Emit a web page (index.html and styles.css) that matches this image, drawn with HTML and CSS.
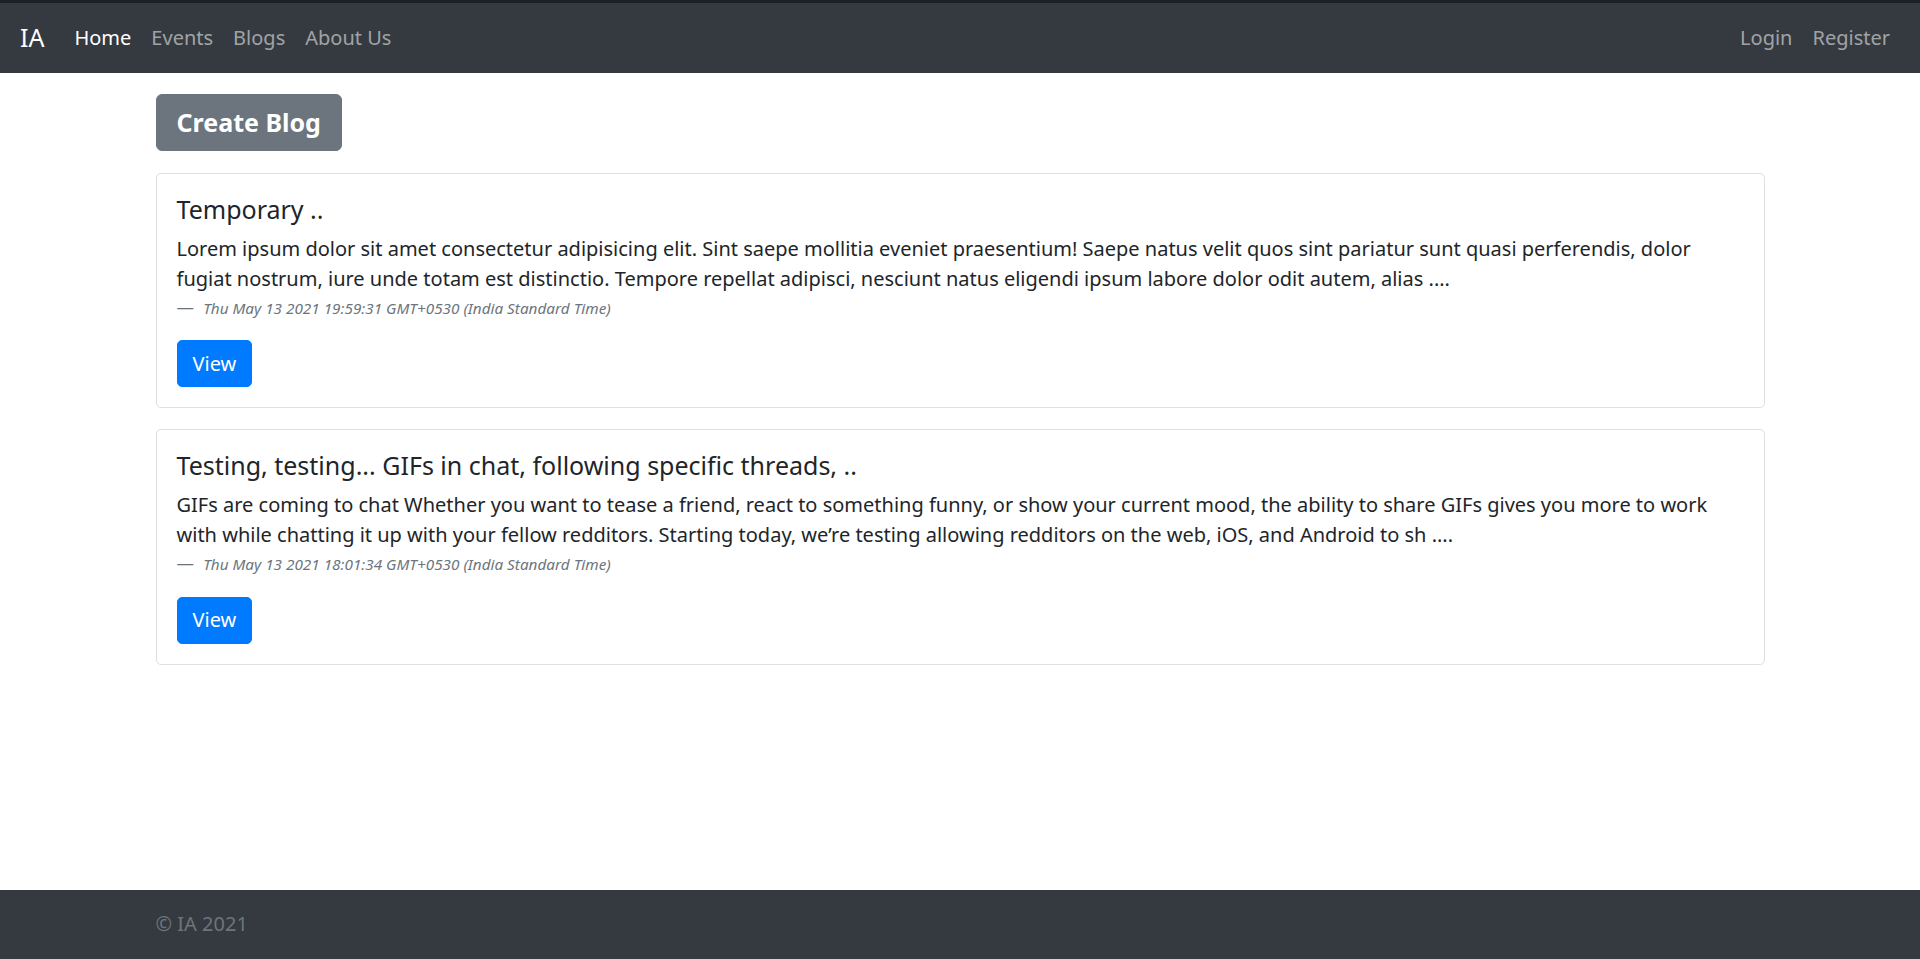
FILE: index.html
```html
<!DOCTYPE html>
<html lang="en">
<head>
<meta charset="utf-8">
<title>IA</title>
<link rel="stylesheet" href="styles.css">
</head>
<body>
<nav class="navbar">
  <a class="brand" href="#">IA</a>
  <ul class="nav-list">
    <li><a class="nav-link active" href="#">Home</a></li>
    <li><a class="nav-link" href="#">Events</a></li>
    <li><a class="nav-link" href="#">Blogs</a></li>
    <li><a class="nav-link" href="#">About Us</a></li>
  </ul>
  <ul class="nav-list nav-right">
    <li><a class="nav-link" href="#">Login</a></li>
    <li><a class="nav-link" href="#">Register</a></li>
  </ul>
</nav>

<main class="container main">
  <div class="actions">
    <a class="btn-create" href="#">Create Blog</a>
  </div>

  <div class="card">
    <h5 class="card-title">Temporary ..</h5>
    <p class="card-text">Lorem ipsum dolor sit amet consectetur adipisicing elit. Sint saepe mollitia eveniet praesentium! Saepe natus velit quos sint pariatur sunt quasi perferendis, dolor fugiat nostrum, iure unde totam est distinctio. Tempore repellat adipisci, nesciunt natus eligendi ipsum labore dolor odit autem, alias ....</p>
    <div class="card-date"> <small class="date-text">Thu May 13 2021 19:59:31 GMT+0530 (India Standard Time)</small></div>
    <a class="btn-view" href="#">View</a>
  </div>

  <div class="card">
    <h5 class="card-title">Testing, testing... GIFs in chat, following specific threads, ..</h5>
    <p class="card-text">GIFs are coming to chat Whether you want to tease a friend, react to something funny, or show your current mood, the ability to share GIFs gives you more to work with while chatting it up with your fellow redditors. Starting today, we’re testing allowing redditors on the web, iOS, and Android to sh ....</p>
    <div class="card-date"> <small class="date-text">Thu May 13 2021 18:01:34 GMT+0530 (India Standard Time)</small></div>
    <a class="btn-view" href="#">View</a>
  </div>
</main>

<footer class="footer">
  <div class="container">
    <span class="copy">© IA 2021</span>
  </div>
</footer>
</body>
</html>
```

FILE: styles.css
```css
* {
  box-sizing: border-box;
}

html, body {
  margin: 0;
  padding: 0;
}

body {
  font-family: "Noto Sans", "Open Sans", sans-serif;
  font-size: 20px;
  line-height: 1.5;
  color: #212529;
  background: #fff;
  min-height: 100vh;
  display: flex;
  flex-direction: column;
}

a {
  text-decoration: none;
}

.navbar {
  display: flex;
  align-items: center;
  background: #343a40;
  border-top: 3px solid #1d2029;
  padding: 10px 20px;
}

.brand {
  font-size: 25px;
  line-height: 37.5px;
  padding: 6.25px 0;
  margin-right: 20px;
  color: #fff;
}

.nav-list {
  list-style: none;
  margin: 0;
  padding: 0;
  display: flex;
}

.nav-right {
  margin-left: auto;
}

.nav-link {
  display: block;
  padding: 10px;
  line-height: 30px;
  color: rgba(255, 255, 255, 0.55);
}

.nav-link.active {
  color: #fff;
}

.container {
  width: 1609px;
  margin: 0 auto;
}

.main {
  flex: 1 0 auto;
}

.actions {
  margin-top: 21px;
  margin-bottom: 22px;
}

.btn-create {
  display: inline-block;
  background: #6c757d;
  border: 1px solid #6c757d;
  color: #fff;
  font-size: 25px;
  font-weight: 700;
  line-height: 35px;
  padding: 10px 20px;
  border-radius: 6px;
  vertical-align: top;
}

.card {
  border: 1px solid rgba(0, 0, 0, 0.125);
  border-radius: 5px;
  padding: 20px;
  margin-bottom: 21px;
}

.card-title {
  font-size: 25px;
  font-weight: 400;
  line-height: 1.2;
  margin: 0 0 10px;
}

.card-text {
  margin: 0;
}

.card-date {
  font-size: 17.5px;
  line-height: 26.25px;
  height: 26.25px;
  color: #6c757d;
  margin-bottom: 20px;
}

.card-date::before {
  content: "\2014\00A0";
}

.date-text {
  font-size: 0.875em;
  font-style: italic;
  line-height: 1;
}

.btn-view {
  display: inline-block;
  background: #007bff;
  border: 1px solid #007bff;
  color: #fff;
  padding: 7.5px 15px;
  line-height: 30px;
  border-radius: 5px;
  vertical-align: top;
}

.footer {
  background: #343a40;
  padding: 19px 0;
  height: 69px;
}

.copy {
  color: #6c757d;
}
```
